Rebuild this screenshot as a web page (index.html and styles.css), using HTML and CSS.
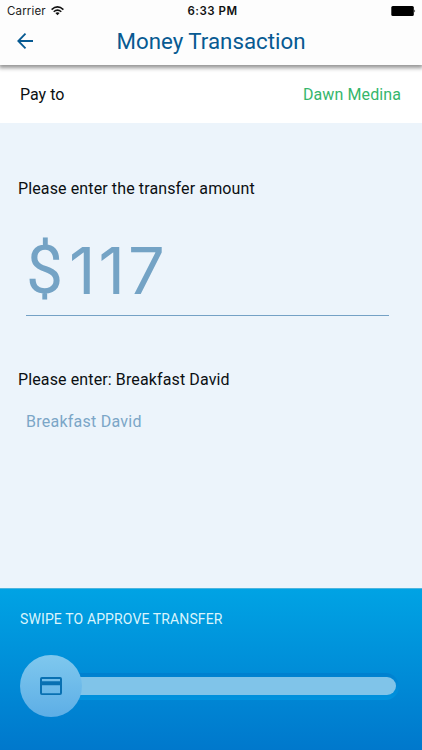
FILE: index.html
```html
<!DOCTYPE html>
<html lang="en">
<head>
    <meta charset="UTF-8">
    <meta name="viewport" content="width=device-width, initial-scale=1.0">
    <title>Money Transaction</title>
    <link rel="stylesheet" href="styles.css">
</head>
<body>
<div class="screen">
    <header class="header">
        <div class="status-bar">
            <div class="carrier">
                <span>Carrier</span>
                <svg class="wifi" width="13" height="10" viewBox="0 0 13 10" fill="none" stroke="#111" stroke-width="1.5">
                    <path d="M0.6 3.6Q6.5 -1.8 12.4 3.6"/>
                    <path d="M2.7 5.8Q6.5 2.4 10.3 5.8"/>
                    <path d="M4.4 7Q6.5 5.4 8.6 7L6.5 9.3Z" fill="#111" stroke="none"/>
                </svg>
            </div>
            <span class="time">6:33 PM</span>
            <svg class="battery" width="25" height="10" viewBox="0 0 25 10">
                <rect x="0.3" y="0" width="22.5" height="10" rx="1.5"/>
                <path d="M23.4 3.4Q25 5 23.4 6.6Z"/>
            </svg>
        </div>
        <div class="nav">
            <svg class="back" width="16" height="16" viewBox="0 0 16 16" fill="none" stroke="#075a92" stroke-width="1.8">
                <path d="M16 8H1.5M8.5 0.7L1.3 8L8.5 15.3"/>
            </svg>
            <h1 class="title">Money Transaction</h1>
        </div>
    </header>

    <div class="payee">
        <span>Pay to</span>
        <span class="payee-name">Dawn Medina</span>
    </div>

    <main class="form">
        <p class="label">Please enter the transfer amount</p>
        <div class="amount"><span class="currency">$</span><span class="digits">117</span></div>
        <p class="label">Please enter: Breakfast David</p>
        <p class="note">Breakfast David</p>
    </main>

    <footer class="approve">
        <p class="approve-text">SWIPE TO APPROVE TRANSFER</p>
        <div class="slider">
            <div class="knob">
                <svg width="24" height="20" viewBox="0 0 24 20">
                    <path fill="#0870b2" fill-rule="evenodd" d="M3 1H21Q23 1 23 3V17Q23 19 21 19H3Q1 19 1 17V3Q1 1 3 1ZM3 3V5.2H21V3ZM3 9.3V17.2H21V9.3Z"/>
                </svg>
            </div>
            <div class="track"><div class="track-fill"></div></div>
        </div>
    </footer>
</div>
</body>
</html>
```

FILE: styles.css
```css
* {
    box-sizing: border-box;
}
body {
    margin: 0;
    font-family: Roboto, sans-serif;
    font-size: 16px;
    color: #0b0f12;
}
h1, p {
    margin: 0;
    font-weight: 400;
}
.screen {
    display: flex;
    flex-direction: column;
    height: 750px;
    background: #ecf4fb;
}

/* Header */
.header {
    position: relative;
    height: 65px;
    background: #fdfdfd;
    box-shadow: 0 2px 4px 1px rgba(0, 0, 0, 0.42);
}
.status-bar {
    display: grid;
    grid-template-columns: 1fr auto 1fr;
    align-items: center;
    height: 22px;
    padding: 0 6px 0 9px;
    font-family: Inter, sans-serif;
    font-size: 11.5px;
}
.carrier {
    display: flex;
    align-items: center;
    gap: 5px;
    margin-left: -2px;
    letter-spacing: 0.15px;
    color: #222;
}
.time {
    font-weight: 600;
    font-size: 11.5px;
    letter-spacing: 0.5px;
    color: #111;
}
.battery {
    justify-self: end;
}
.nav {
    display: grid;
    grid-template-columns: 16px 1fr 16px;
    align-items: center;
    height: 38px;
    padding: 0 17px;
}
.title {
    font-size: 22.3px;
    text-align: center;
    color: #075a92;
}

/* Payee row */
.payee {
    display: flex;
    justify-content: space-between;
    align-items: center;
    height: 58px;
    padding: 1px 21px 0 20px;
    background: #fff;
}
.payee-name {
    letter-spacing: 0.1px;
    color: #35b66c;
}

/* Amount and note */
.form {
    flex: 1;
    padding: 56px 33px 0 18px;
}
.label {
    letter-spacing: 0.12px;
    line-height: 20px;
}
.amount {
    display: flex;
    align-items: center;
    height: 117px;
    margin: 0 0 54px 8px;
    padding-top: 28px;
    border-bottom: 1px solid #74a1c5;
    line-height: 80px;
    color: #74a3c5;
}
.currency {
    width: 43px;
    font-size: 66px;
}
.digits {
    font-family: Inter, sans-serif;
    font-size: 65px;
    letter-spacing: 3px;
}
.note {
    margin: 22px 0 0 8px;
    letter-spacing: 0.25px;
    line-height: 20px;
    color: #7ba6c7;
}

/* Swipe to approve */
.approve {
    height: 162px;
    padding: 21px 23px 0 20px;
    border-top: 1px solid #4cb5df;
    background: linear-gradient(#00a3e4, #0078cc);
}
.approve-text {
    font-size: 14px;
    letter-spacing: 0.12px;
    line-height: 18px;
    color: #d9f4fc;
}
.slider {
    display: flex;
    align-items: center;
    margin-top: 27px;
}
.knob {
    z-index: 1;
    display: flex;
    justify-content: center;
    align-items: center;
    width: 62px;
    height: 62px;
    border-radius: 50%;
    background: linear-gradient(#7fc8ee, #5daee6);
}
.track {
    flex: 1;
    height: 27px;
    margin-left: -5px;
    padding: 4px 3px 5px 0;
    border-radius: 0 14px 14px 0;
    background: linear-gradient(#0080cf, #0093de);
}
.track-fill {
    height: 18px;
    border-radius: 0 9px 9px 0;
    background: #80c4e9;
}
```
